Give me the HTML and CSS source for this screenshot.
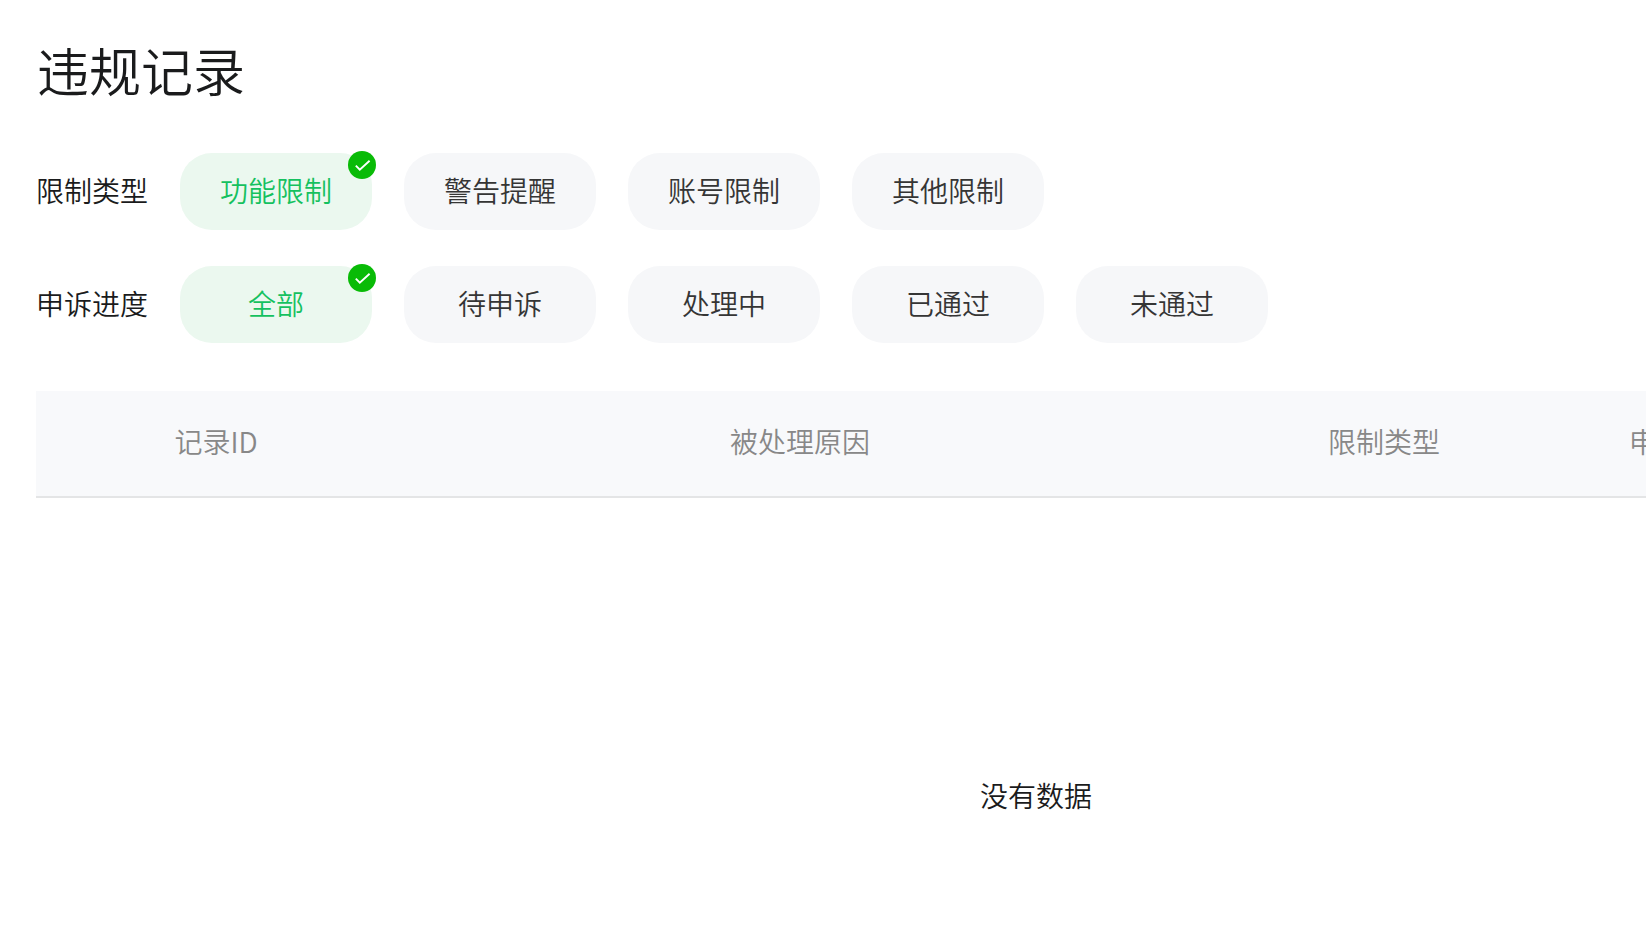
FILE: index.html
```html
<!DOCTYPE html>
<html lang="zh-CN">
<head>
    <meta charset="utf-8">
    <title>违规记录</title>
    <link rel="stylesheet" href="styles.css">
</head>
<body>
    <div class="page">
        <h1 class="title">违规记录</h1>

        <div class="filter">
            <span class="filter-label">限制类型</span>
            <button class="tag active">功能限制
                <svg class="check" viewBox="0 0 28 28"><circle cx="14" cy="14" r="14"/><path d="M7.8 14.6l4 4L21.6 9.8"/></svg>
            </button>
            <button class="tag">警告提醒</button>
            <button class="tag">账号限制</button>
            <button class="tag">其他限制</button>
        </div>

        <div class="filter">
            <span class="filter-label">申诉进度</span>
            <button class="tag active">全部
                <svg class="check" viewBox="0 0 28 28"><circle cx="14" cy="14" r="14"/><path d="M7.8 14.6l4 4L21.6 9.8"/></svg>
            </button>
            <button class="tag">待申诉</button>
            <button class="tag">处理中</button>
            <button class="tag">已通过</button>
            <button class="tag">未通过</button>
        </div>

        <div class="table">
            <div class="table-head">
                <div>记录ID</div>
                <div>被处理原因</div>
                <div>限制类型</div>
                <div>申诉进度</div>
                <div></div>
            </div>
            <div class="table-empty">没有数据</div>
        </div>
    </div>
</body>
</html>
```
FILE: styles.css
```css
* {box-sizing: border-box;}
html, body {height: 100%;}
body {
    margin: 0;
    overflow: hidden;
    background-color: #fff;
    color: #1a1b1c;
    font-family: "Noto Sans CJK SC", sans-serif;
    font-size: 28px;
    font-weight: 350;
}

.page {height: 100%; padding: 32px 0 0 36px; overflow: hidden;}
.title {margin: 0 0 45px; font-size: 52px; font-weight: 350; line-height: 76px; text-indent: 1px;}

/* filters */
.filter {display: flex; align-items: center; gap: 32px; margin-bottom: 36px;}
.filter-label {width: 112px; padding-bottom: 3px; line-height: 40px;}
.tag {
    position: relative;
    width: 192px;
    height: 77px;
    padding: 0 0 3px;
    border: 0;
    border-radius: 32px;
    background-color: #f6f7f9;
    color: #353535;
    font: inherit;
    line-height: 40px;
    cursor: pointer;
}
.tag.active {background-color: #ebf8ef; color: #15c15f;}
.check {position: absolute; top: -2px; right: -4px; width: 28px; height: 28px;}
.check circle {fill: #09bb07;}
.check path {fill: none; stroke: #fff; stroke-width: 1.9;}

/* table, wider than the window */
.table {width: 2000px; margin-top: 48px;}
.table-head {
    display: grid;
    grid-template-columns: 360px 808px 360px 242px 230px;
    align-items: center;
    height: 107px;
    padding-bottom: 5px;
    border-bottom: 2px solid #e4e5e6;
    background-color: #f8f9fb;
    color: #888;
    text-align: center;
}
.table-empty {
    display: flex;
    align-items: center;
    justify-content: center;
    height: 594px;
}
```
